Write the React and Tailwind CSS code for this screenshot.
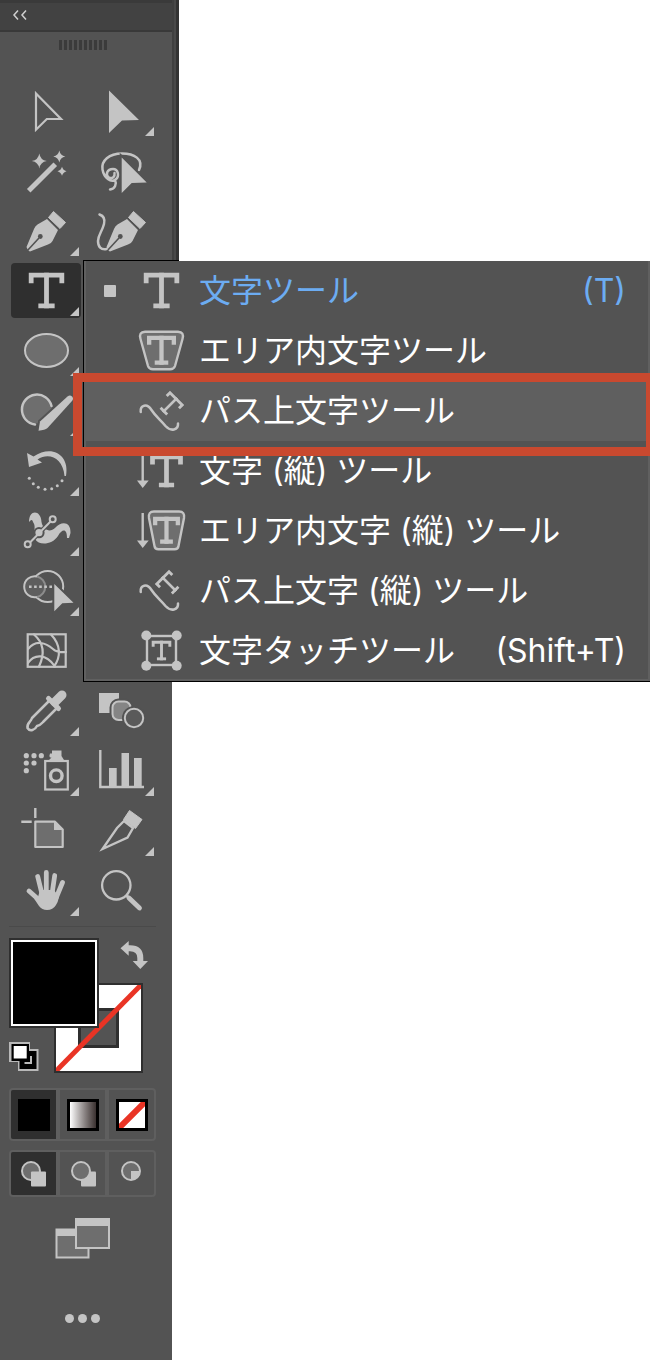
import { FiType } from "react-icons/fi";
import clsx from "clsx";

const LIGHT = "#c4c4c4";
const MID = "#6e6e6e";
const PANEL = "#535353";

const line = { fill: "none", stroke: LIGHT, strokeWidth: 2.5, strokeLinecap: "round", strokeLinejoin: "round" };

// slab T centred on (cx, cy)
function SlabT({ cx, cy, size = 46, weight = 2.5, rotate = 0 }) {
  return (
    <g transform={`translate(${cx} ${cy}) rotate(${rotate})`}>
      <FiType
        x={-size / 2}
        y={-size / 2}
        size={size}
        strokeWidth={weight}
        strokeLinecap="square"
        strokeLinejoin="miter"
        color={LIGHT}
      />
    </g>
  );
}

function Star({ x, y, r }) {
  return (
    <path
      fill={LIGHT}
      d={`M${x} ${y - r}Q${x + 1} ${y - 1} ${x + r} ${y}Q${x + 1} ${y + 1} ${x} ${y + r}Q${x - 1} ${y + 1} ${x - r} ${y}Q${x - 1} ${y - 1} ${x} ${y - r}Z`}
    />
  );
}

function Dots({ points, r }) {
  return points.map(([x, y]) => <circle key={`${x}-${y}`} cx={x} cy={y} r={r} fill={LIGHT} />);
}

function Nib({ dx = 0 }) {
  return (
    <g transform={`translate(${dx} 0)`}>
      <path fill={LIGHT} d="M17.500 46L25 28Q26 25 28.500 23.500L38 18L49 29L43.500 40Q42 43 39 43.500L21 50.500Q19 50 17.500 46Z" />
      <path stroke={PANEL} strokeWidth="1.6" d="M18 50L30 37" />
      <circle cx="31.300" cy="35.500" r="2.400" fill={PANEL} />
      <path fill={LIGHT} stroke={LIGHT} strokeLinejoin="round" d="M44.500 10.500L56.500 21.500L51 27.500L39.500 16.500Z" />
    </g>
  );
}

const TOOLS = [
  {
    label: "選択ツール",
    icon: <path {...line} strokeLinejoin="miter" strokeWidth="2.200" d="M27 12.500L52 38H37.800L27 48.700Z" />,
  },
  {
    label: "ダイレクト選択ツール",
    flyout: true,
    icon: <path fill={LIGHT} d="M25 9.500L55 39L38 39.500L25 52Z" />,
  },
  {
    label: "自動選択ツール",
    icon: (
      <>
        <path {...line} strokeLinecap="square" strokeWidth="5" d="M21.500 48L44.500 25" />
        <Star x={30.3} y={20} r={7.5} />
        <Star x={50.3} y={15.5} r={6} />
        <Star x={53} y={30.3} r={4.5} />
      </>
    ),
  },
  {
    label: "なげなわツール",
    icon: (
      <>
        <path
          {...line}
          d="M55 29C60 18 50 12.500 38 12.500C25 12.500 17 20 18.500 28.500C20 37 27 42 31.500 38.500C36 35 34 28 29 28C23 28 21 34 25 36.500C29 38.500 31 35 30.500 32M31 39C33 43 31 48 26 48.500"
        />
        <path fill={LIGHT} stroke={PANEL} strokeWidth="4" paintOrder="stroke" d="M37.700 16.500L62.700 41.500L47.700 42L37.700 52Z" />
      </>
    ),
  },
  { label: "ペンツール", flyout: true, icon: <Nib /> },
  {
    label: "曲線ツール",
    icon: (
      <>
        <Nib dx={5} />
        <path {...line} d="M15.500 13.500C20 15 21 19 20 23C18 31 14 34 14 40C14 46 17 49 22.500 48" />
      </>
    ),
  },
  { label: "文字ツール", flyout: true, selected: true, icon: <SlabT cx={37.5} cy={29.5} /> },
  null,
  {
    label: "楕円形ツール",
    flyout: true,
    icon: <ellipse cx="37.500" cy="29.500" rx="21.500" ry="16.500" fill={MID} stroke={LIGHT} strokeWidth="2" />,
  },
  null,
  {
    label: "ブラシツール",
    flyout: true,
    icon: (
      <>
        <circle cx="28.300" cy="28" r="14.500" fill={MID} />
        <path {...line} d="M42.500 25A15 15 0 1 0 26 43.500" />
        <path
          fill={LIGHT}
          stroke={PANEL}
          strokeWidth="4"
          paintOrder="stroke"
          d="M29.500 49.700L31 40.500L58.500 15.500Q61 13.500 63 15.500Q65 17.500 63 20L38.500 47Q36 49 29.500 49.700Z"
        />
      </>
    ),
  },
  null,
  {
    label: "回転ツール",
    flyout: true,
    icon: (
      <>
        <path fill={LIGHT} d="M18 12L20 26L33 21.500L28.500 18.500C40 11 54 17 55.500 35L57 35C61 14 43 3 24.500 15.500Z" />
        <Dots
          r={1.5}
          points={[[20.3, 37.3], [24.3, 42.7], [29.3, 46.3], [36, 48.3], [42.7, 47.7], [48.3, 44.7], [53, 39.7]]}
        />
      </>
    ),
  },
  null,
  {
    label: "線幅ツール",
    flyout: true,
    icon: (
      <>
        <path
          fill={LIGHT}
          d="M20 21C20 8 32 9 32.500 21C34 29 41 32 46 27C52 20 62 20 61.500 32L60 37H58C58 27 53 28 49 35C43 44 30 45 26 38C23 33 28 26 24 21C23 18 22 19 20 21Z"
        />
        <path stroke={PANEL} strokeWidth="4.500" d="M19 43.500L43.500 18.500" />
        <circle cx="30" cy="31.700" r="5.600" fill={PANEL} />
        <circle cx="43.700" cy="18.300" r="5" fill={PANEL} />
        <path stroke={LIGHT} strokeWidth="2" d="M20 42.500L42.500 19.500" />
        <circle cx="30" cy="31.700" r="3.600" fill={LIGHT} />
        <circle cx="18.700" cy="43.300" r="3" fill={PANEL} stroke={LIGHT} strokeWidth="2" />
        <circle cx="43.700" cy="18.300" r="3" fill={PANEL} stroke={LIGHT} strokeWidth="2" />
      </>
    ),
  },
  null,
  {
    label: "シェイプ形成ツール",
    flyout: true,
    icon: (
      <>
        <circle cx="38.700" cy="25.500" r="15.500" fill="none" stroke={LIGHT} strokeWidth="2" />
        <circle cx="26.700" cy="25.700" r="10.500" fill="#5e5e5e" />
        <path fill="none" stroke={LIGHT} strokeWidth="2" d="M28 15.500A10.500 10.500 0 1 0 28 36" />
        <path fill="none" stroke="#8c8c8c" strokeWidth="2" d="M28 15.500A10.500 10.500 0 0 1 28 36" />
        <path stroke={LIGHT} strokeWidth="2.600" strokeDasharray="2.600 2.500" d="M20 25.700H43" />
        <path fill={LIGHT} stroke={PANEL} strokeWidth="4" paintOrder="stroke" d="M45.300 23L64.500 41.700L53.300 42.300L45.300 50.300Z" />
      </>
    ),
  },
  null,
  {
    label: "メッシュツール",
    icon: (
      <>
        <rect x="18.700" y="13.300" width="38" height="32.500" fill="none" stroke={LIGHT} strokeWidth="2.200" />
        <path
          {...line}
          strokeWidth="2.200"
          d="M19 28C27 18 37 22 44 28C48 32 52 31 57 31M25 13.500C36 23 35 35 30 45.500M42 13.500C52 24 52 36 45 45.500M19 42C25 33 37 32 46 45.500"
        />
      </>
    ),
  },
  null,
  {
    label: "スポイトツール",
    flyout: true,
    icon: (
      <>
        <path {...line} strokeWidth="9" d="M46 21L53 14" />
        <path {...line} strokeWidth="5" d="M39.500 17.500L49.500 27.500" />
        <path {...line} d="M39.500 20.500L23 37C22 41 17.500 42 18.500 47C21 51 26 49 28 45C32 44 33 42 35 40L47 28" />
      </>
    ),
  },
  {
    label: "ブレンドツール",
    icon: (
      <>
        <rect x="15" y="12" width="20" height="20" fill={LIGHT} />
        <rect x="28.500" y="20.500" width="18" height="18.500" rx="6" fill="#858585" stroke={PANEL} strokeWidth="6" />
        <rect x="28.500" y="20.500" width="18" height="18.500" rx="6" fill="#858585" stroke={LIGHT} strokeWidth="2" />
        <circle cx="50" cy="37" r="12" fill={PANEL} />
        <circle cx="50" cy="37" r="9.200" fill="#5a5a5a" stroke={LIGHT} strokeWidth="2" />
      </>
    ),
  },
  {
    label: "シンボルスプレーツール",
    flyout: true,
    icon: (
      <>
        <Dots r={2.6} points={[[17.3, 14.7], [25, 14.7], [32.3, 14.7], [17.3, 22], [25, 22], [17.3, 29.7]]} />
        <path fill={LIGHT} d="M43 9.500H52.500V15L55 19H40L42.500 16.500H41Q40 14.500 41 12.500H43Z" />
        <rect x="36.200" y="20" width="22.600" height="28.500" fill="none" stroke={LIGHT} strokeWidth="2.200" />
        <circle cx="47.300" cy="34.700" r="5.800" fill="none" stroke={LIGHT} strokeWidth="3.400" />
      </>
    ),
  },
  {
    label: "棒グラフツール",
    flyout: true,
    icon: (
      <>
        <path fill="none" stroke={LIGHT} strokeWidth="2.400" d="M16.300 9V46H60" />
        <path fill={LIGHT} d="M25 27H32.700V46H25ZM37.500 12H45V46H37.500ZM50 17H57.700V46H50Z" />
      </>
    ),
  },
  {
    label: "アートボードツール",
    icon: (
      <>
        <path stroke={LIGHT} strokeWidth="2.400" d="M26.300 7V17M12.300 20.700H22.700" />
        <path fill={MID} stroke={LIGHT} strokeWidth="2.200" strokeLinejoin="round" d="M26.300 20.700H46L53.700 28.500V46H26.300Z" />
        <path fill={LIGHT} d="M45 20.500L54 29H45Z" />
      </>
    ),
  },
  {
    label: "スライスツール",
    flyout: true,
    icon: (
      <>
        <path fill="none" stroke={LIGHT} strokeWidth="2.300" d="M18.500 48L33 27L40 20L49 27L43.500 36.500Z" />
        <path fill={LIGHT} stroke={LIGHT} strokeLinejoin="round" d="M45.500 9.500L58 18.500L51.500 27.500L39.500 18.500Z" />
      </>
    ),
  },
  {
    label: "手のひらツール",
    flyout: true,
    icon: (
      <>
        <path {...line} strokeWidth="4.800" d="M20 30L29 38M28.700 15.500L33 33M37.300 11.500V32M45.700 14.500L43 33M53.500 21.500L47.500 36" />
        <path fill={LIGHT} d="M31 29H45L50 36Q49 41 47 44Q44 49 38 49Q33 49 30 45L25 37.500L29 36Z" />
      </>
    ),
  },
  {
    label: "ズームツール",
    icon: (
      <>
        <circle cx="32.300" cy="24.300" r="14.200" fill="none" stroke={LIGHT} strokeWidth="2.300" />
        <path stroke={LIGHT} strokeWidth="3" d="M42 34L46 38" />
        <path {...line} strokeWidth="4.800" d="M45 37L55.500 47" />
      </>
    ),
  },
];

const WAVE = "M9.700 31C9 24 16 22 20.500 29C25 36 30 39 34.500 45C40 51 47.500 49 47 42.500";
const DOWN_ARROW = (
  <>
    <path stroke={LIGHT} strokeWidth="2.400" d="M11.700 12V40" />
    <path fill={LIGHT} d="M6 39.500H17.700L11.700 47Z" />
  </>
);

const MENU = [
  { name: "文字ツール", shortcut: "(T)", active: true, icon: <SlabT cx={30.5} cy={29.5} /> },
  {
    name: "エリア内文字ツール",
    icon: (
      <>
        <path
          fill={MID}
          stroke={LIGHT}
          strokeWidth="2.400"
          d="M14 10.800H47Q53.500 11 51.500 18L44 45Q43 48.300 39 48.300H22Q18 48.300 17 45L9.500 18Q7.500 11 14 10.800Z"
        />
        <SlabT cx={30.5} cy={29.3} size={37} weight={2.8} />
      </>
    ),
  },
  {
    name: "パス上文字ツール",
    highlighted: true,
    icon: (
      <>
        <path {...line} d={WAVE} />
        <SlabT cx={39} cy={24} size={26} weight={2.6} rotate={45} />
      </>
    ),
  },
  {
    name: "文字 (縦) ツール",
    icon: (
      <>
        {DOWN_ARROW}
        <SlabT cx={35.5} cy={30} size={42} weight={2.7} />
      </>
    ),
  },
  {
    name: "エリア内文字 (縦) ツール",
    icon: (
      <>
        {DOWN_ARROW}
        <path
          fill={MID}
          stroke={LIGHT}
          strokeWidth="2.400"
          d="M23 10.500H48Q54 10.500 53 17L47.500 45Q47 48.300 43.500 48.300H27.500Q24 48.300 23.500 45L18 17Q17 10.500 23 10.500Z"
        />
        <SlabT cx={35.5} cy={29.3} size={34} weight={3} />
      </>
    ),
  },
  {
    name: "パス上文字 (縦) ツール",
    icon: (
      <>
        <path {...line} d={WAVE} />
        <SlabT cx={38} cy={23} size={26} weight={2.6} rotate={-45} />
      </>
    ),
  },
  {
    name: "文字タッチツール",
    shortcut: "(Shift+T)",
    icon: (
      <>
        <rect x="16" y="15" width="29" height="29" fill="none" stroke={LIGHT} strokeWidth="2.400" />
        <Dots r={5} points={[[15.3, 14.5], [45.7, 14.5], [15.3, 44.7], [45.7, 44.7]]} />
        <SlabT cx={30.5} cy={29.5} size={25} weight={2.8} />
      </>
    ),
  },
];

function Tool({ tool }) {
  if (!tool) return <span />;
  return (
    <button type="button" aria-label={tool.label} aria-pressed={!!tool.selected}>
      <svg width="75" height="60" viewBox="0 0 75 60">
        {tool.selected && <rect x="2" y="2" width="70" height="55" rx="4" fill="#2f2f2f" />}
        {tool.icon}
        {tool.flyout && <path fill={LIGHT} d="M70 46V55H61Z" />}
      </svg>
    </button>
  );
}

function Swatches() {
  return (
    <div className="mt-[11px] grid grid-cols-[45px_45px_44px] grid-rows-[45px_45px_45px]">
      <button
        type="button"
        aria-label="塗り"
        className="z-10 col-span-2 col-start-1 row-span-2 row-start-1 border-2 border-[#2f2f2f] bg-white p-[2px]"
      >
        <span className="block h-full bg-black" />
      </button>
      <button type="button" aria-label="塗りと線を入れ替え" className="col-start-3 row-start-1">
        <svg className="overflow-visible" width="44" height="45" viewBox="0 0 44 45">
          <path fill="none" stroke={LIGHT} strokeWidth="6" d="M28 10.300H31Q41.300 10.300 41.300 20V24" />
          <path fill={LIGHT} d="M21.500 10.300L29.700 3V17.700ZM33.700 23H49L41.300 31Z" />
        </svg>
      </button>
      <button
        type="button"
        aria-label="線"
        className="col-span-2 col-start-2 row-span-2 row-start-2 border-2 border-[#2f2f2f] bg-white"
      >
        <svg className="block h-full w-full" viewBox="0 0 85 86">
          <rect x="23.500" y="24.500" width="38" height="37" fill={PANEL} stroke="#2f2f2f" strokeWidth="3" />
          <path stroke="#e93425" strokeWidth="5" d="M0 86L85 0" />
        </svg>
      </button>
      <button type="button" aria-label="初期設定の塗りと線" className="col-start-1 row-start-3">
        <svg width="45" height="45" viewBox="0 0 45 45">
          <path fill="#b9b9b9" d="M0 14H21V21H29.500V43H9V34H0Z" />
          <rect x="10.500" y="23" width="17" height="18" fill="#000" />
          <path fill="none" stroke="#b9b9b9" strokeWidth="2" d="M22 28V35H15.500" />
          <rect x="2.500" y="16" width="17.500" height="17" fill="#000" />
          <rect x="4.700" y="18" width="13" height="12.500" fill="#fff" />
        </svg>
      </button>
    </div>
  );
}

function ModeRow({ children, className }) {
  return (
    <div className={clsx("flex divide-x-4 divide-[#5f5f5f] overflow-hidden rounded-[4px] border-2 border-[#5f5f5f]", className)}>
      {children}
    </div>
  );
}

function ModeButton({ label, selected, children }) {
  return (
    <button
      type="button"
      aria-label={label}
      aria-pressed={!!selected}
      className={clsx("flex flex-1 items-center justify-center", selected && "bg-[#2f2f2f]")}
    >
      {children}
    </button>
  );
}

function Toolbar() {
  return (
    <aside className="min-h-screen w-[172px] shrink-0 bg-[#535353]">
      <header className="flex h-8 items-center border-t-[3px] border-b-2 border-t-[#3a3a3a] border-b-[#393939] bg-[#424242] pb-1 pl-3">
        <button type="button" aria-label="パネルを折りたたむ">
          <svg className="block" width="16" height="10" viewBox="0 0 16 10" fill="none" stroke="#d0d0d0" strokeWidth="1.500">
            <path d="M6 0.500L2 5L6 9.500M14 0.500L10 5L14 9.500" />
          </svg>
        </button>
      </header>

      <div className="flex flex-col pr-4 pb-8 pl-[9px]">
        <div className="mt-2 flex h-[10px] justify-center gap-[2px]">
          {Array.from({ length: 10 }, (_, i) => (
            <span key={i} className="w-[3px] bg-[#3b3b3b]" />
          ))}
        </div>

        <div className="mt-[31px] grid auto-rows-[60px] grid-cols-[75px_75px]">
          {TOOLS.map((tool, i) => (
            <Tool key={i} tool={tool} />
          ))}
        </div>

        <hr className="mt-[5px] border-t border-[#4a4a4a]" />
        <Swatches />

        <ModeRow className="mt-[15px] h-[53px]">
          <ModeButton label="カラー" selected>
            <span className="size-8 bg-black" />
          </ModeButton>
          <ModeButton label="グラデーション">
            <span className="size-8 border-[3px] border-black bg-linear-to-r from-white to-[#3b3231]" />
          </ModeButton>
          <ModeButton label="なし">
            <svg className="size-8 border-[3px] border-black bg-white" viewBox="0 0 26 26">
              <path stroke="#e93425" strokeWidth="6" d="M-2 28L28 -2" />
            </svg>
          </ModeButton>
        </ModeRow>

        <ModeRow className="mt-[9px] h-[47px]">
          <ModeButton label="標準描画" selected>
            <svg width="26" height="26" viewBox="0 0 26 26">
              <circle cx="10" cy="10" r="9" fill={MID} stroke={LIGHT} strokeWidth="2" />
              <rect x="10" y="10.500" width="15" height="15" rx="1" fill={LIGHT} />
            </svg>
          </ModeButton>
          <ModeButton label="背面描画">
            <svg width="26" height="26" viewBox="0 0 26 26">
              <rect x="11" y="10.500" width="15" height="15" rx="1" fill={LIGHT} />
              <circle cx="11" cy="10" r="9" fill={MID} stroke={LIGHT} strokeWidth="2" />
            </svg>
          </ModeButton>
          <ModeButton label="内側描画">
            <svg width="26" height="26" viewBox="0 0 26 26">
              <circle cx="12" cy="10" r="9" fill={MID} stroke={LIGHT} strokeWidth="2" />
              <path fill={LIGHT} d="M12 10H21A9 9 0 0 1 12 19Z" />
            </svg>
          </ModeButton>
        </ModeRow>

        <button type="button" aria-label="スクリーンモードを変更" className="mt-[21px] self-center">
          <svg className="block" width="55" height="41" viewBox="0 0 55 41">
            <rect x="1.500" y="11.500" width="32" height="28" fill={MID} stroke={LIGHT} strokeWidth="2" />
            <path fill={LIGHT} d="M1 11H34V18H1Z" />
            <rect x="21" y="1" width="33" height="29" fill={MID} stroke={LIGHT} strokeWidth="2" />
            <path fill={LIGHT} d="M20 0H55V8H20Z" />
          </svg>
        </button>

        <button type="button" aria-label="ツールバーを編集" className="mt-[49px] flex h-5 items-center justify-center gap-1">
          <span className="size-[9px] rounded-full bg-[#c4c4c4]" />
          <span className="size-[9px] rounded-full bg-[#c4c4c4]" />
          <span className="size-[9px] rounded-full bg-[#c4c4c4]" />
        </button>
      </div>
    </aside>
  );
}

function TypeMenu() {
  return (
    <div className="absolute top-[260px] right-0 left-[83px]">
      <div className="h-px w-24 bg-black" />
      <ul
        role="menu"
        className="border-b border-l border-black bg-[#535353] shadow-[inset_2px_-2px_0_#606060,inset_-2px_0_0_#606060]"
      >
        {MENU.map((item) => (
          <li key={item.name} role="none">
            <button
              type="button"
              role="menuitem"
              className={clsx(
                "flex h-[60px] w-full items-center pr-6 pl-5 text-[32px] leading-10 whitespace-nowrap",
                item.active ? "text-[#6cacf2]" : "text-white",
                item.highlighted && "bg-[#5f5f5f]"
              )}
            >
              <span className={clsx("size-3 rounded-[1px]", item.active && "bg-[#c4c4c4]")} />
              <svg className="ml-[15px] shrink-0" width="60" height="60" viewBox="0 0 60 60">
                {item.icon}
              </svg>
              <span className="ml-2">{item.name}</span>
              {item.shortcut && <span className="ml-auto">{item.shortcut}</span>}
            </button>
          </li>
        ))}
      </ul>
    </div>
  );
}

export default function App() {
  return (
    <div className="relative flex min-h-screen items-start overflow-hidden bg-white font-['Inter','Noto_Sans_CJK_JP',sans-serif]">
      <Toolbar />
      <div className="h-[261px] w-[7px] border-r-[3px] border-l-2 border-r-[#333333] border-l-[#404040] bg-[#494949]" />
      <TypeMenu />
      {/* callout around the path type entry */}
      <div className="pointer-events-none absolute top-[373px] right-0 left-[73px] h-[83px] border-[9px] border-r-4 border-[#c9492f]" />
    </div>
  );
}
